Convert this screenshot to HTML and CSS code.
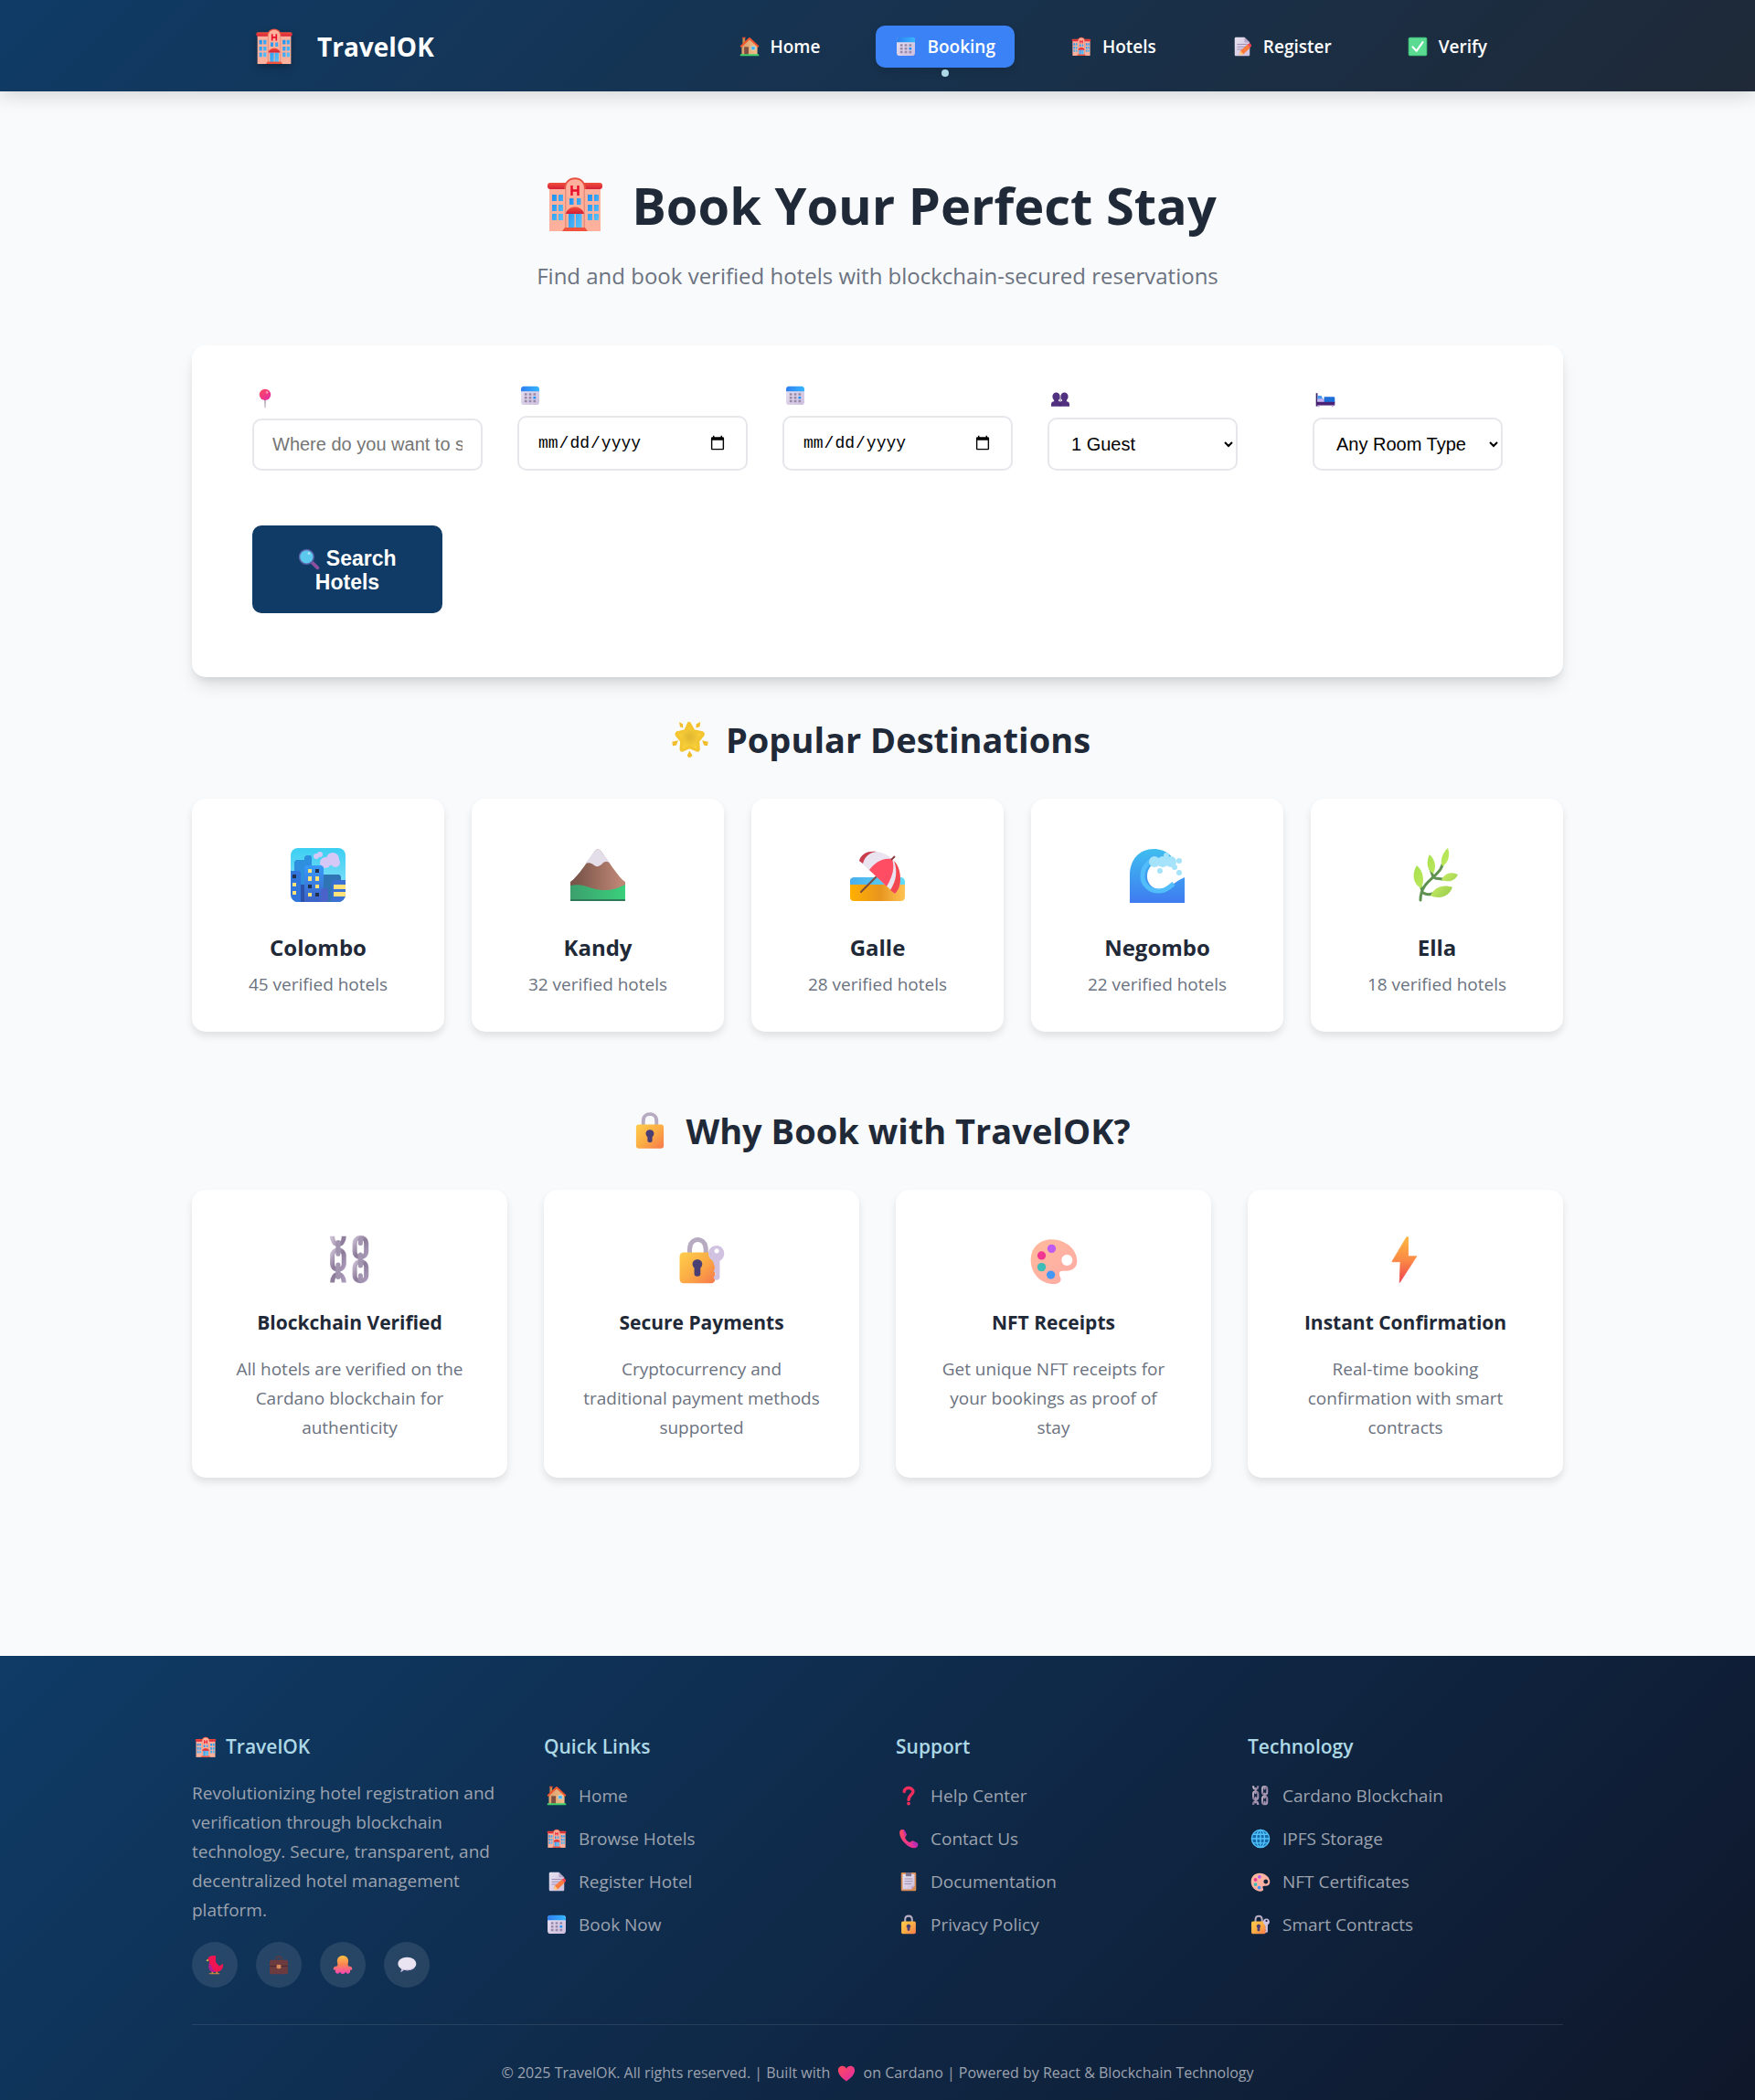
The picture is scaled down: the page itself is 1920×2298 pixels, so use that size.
FILE: index.html
```html
<!DOCTYPE html>
<html lang="en">
<head>
<meta charset="utf-8">
<meta name="viewport" content="width=device-width, initial-scale=1">
<title>TravelOK - Booking</title>
<link rel="stylesheet" href="styles.css">
</head>
<body>
<svg class="sprite" aria-hidden="true">
  <defs>
    <linearGradient id="g-roof" x1="0" y1="0" x2="0" y2="1"><stop offset="0" stop-color="#f0503c"/><stop offset="1" stop-color="#d41f38"/></linearGradient>
    <linearGradient id="g-glass" x1="0" y1="0" x2="1" y2="1"><stop offset="0" stop-color="#1d8ff0"/><stop offset="1" stop-color="#5cc4fb"/></linearGradient>
    <linearGradient id="g-sky" x1="0" y1="0" x2="0" y2="1"><stop offset="0" stop-color="#3bcff2"/><stop offset="1" stop-color="#9fe4fb"/></linearGradient>
    <linearGradient id="g-tower" x1="0" y1="0" x2="0" y2="1"><stop offset="0" stop-color="#389bfa"/><stop offset="1" stop-color="#3c5fc4"/></linearGradient>
    <linearGradient id="g-rock" x1="0" y1="0" x2="1" y2="0"><stop offset=".1" stop-color="#7a5549"/><stop offset=".9" stop-color="#bd8574"/></linearGradient>
    <linearGradient id="g-grass" x1="0" y1="0" x2="1" y2="0"><stop offset="0" stop-color="#3c9f6d"/><stop offset="1" stop-color="#3ad07c"/></linearGradient>
    <linearGradient id="g-sea" x1="0" y1="0" x2="1" y2="0"><stop offset="0" stop-color="#4aaeec"/><stop offset="1" stop-color="#5fdcf8"/></linearGradient>
    <linearGradient id="g-sand" x1="0" y1="0" x2="1" y2="0"><stop offset="0" stop-color="#ffb000"/><stop offset=".55" stop-color="#e8951f"/><stop offset="1" stop-color="#ffc454"/></linearGradient>
    <linearGradient id="g-wave" x1="0" y1="0" x2="0" y2="1"><stop offset="0" stop-color="#3fbdf0"/><stop offset="1" stop-color="#3f7bf0"/></linearGradient>
    <linearGradient id="g-leaf" x1="0" y1="0" x2="1" y2="1"><stop offset="0" stop-color="#9bdc45"/><stop offset=".6" stop-color="#c2ea62"/><stop offset="1" stop-color="#8fc446"/></linearGradient>
    <linearGradient id="g-steel" x1="0" y1="0" x2="1" y2="1"><stop offset="0" stop-color="#c9bdd2"/><stop offset=".5" stop-color="#8b7a98"/><stop offset="1" stop-color="#ab9abb"/></linearGradient>
    <linearGradient id="g-gold" x1="0" y1="0" x2="1" y2="1"><stop offset="0" stop-color="#ffcd4b"/><stop offset=".5" stop-color="#fbad45"/><stop offset="1" stop-color="#f7784b"/></linearGradient>
    <linearGradient id="g-bolt" x1="0" y1="0" x2="0" y2="1"><stop offset="0" stop-color="#fdb73f"/><stop offset=".5" stop-color="#fa8a45"/><stop offset="1" stop-color="#f0434f"/></linearGradient>
    <linearGradient id="g-pal" x1="0" y1="0" x2="1" y2="1"><stop offset="0" stop-color="#ffba9c"/><stop offset="1" stop-color="#ffaaa6"/></linearGradient>
    <linearGradient id="g-wall" x1="0" y1="0" x2="1" y2="0"><stop offset="0" stop-color="#d99e6b"/><stop offset="1" stop-color="#f0bd88"/></linearGradient>
    <linearGradient id="g-page" x1="0" y1="0" x2="1" y2="1"><stop offset="0" stop-color="#e8e2f0"/><stop offset="1" stop-color="#cdbfdf"/></linearGradient>
    <linearGradient id="g-cal" x1="0" y1="0" x2="1" y2="0"><stop offset="0" stop-color="#2e7ff0"/><stop offset="1" stop-color="#35b6ff"/></linearGradient>
    <linearGradient id="g-pink" x1="0" y1="0" x2="1" y2="1"><stop offset="0" stop-color="#ff4a5c"/><stop offset="1" stop-color="#e02ba8"/></linearGradient>
    <linearGradient id="g-octo" x1="0" y1="0" x2="0" y2="1"><stop offset="0" stop-color="#ffc043"/><stop offset=".5" stop-color="#fb8354"/><stop offset="1" stop-color="#fb45b5"/></linearGradient>
    <radialGradient id="g-star"><stop offset="0" stop-color="#dfb630"/><stop offset="1" stop-color="#ffd63c"/></radialGradient>
  </defs>

  <symbol id="hotel" viewBox="-2 -2 64 64">
    <path fill="#fdb09b" d="M2 10h56v49H2z"/>
    <rect fill="url(#g-roof)" y="6" width="60" height="7" rx="3"/>
    <path fill="#e8503f" d="M18 13C18-4 42-4 42 13z"/>
    <path fill="#fdb09b" d="M20 59V12C20-1 40-1 40 12v47z"/>
    <path fill="#e5907f" d="M19 13h1.500v45H19zM39.500 13H41v45h-1.500z"/>
    <path fill="none" stroke="#e8112d" stroke-width="2.500" d="M26.500 9v11M33.500 9v11M26.500 14.500h7"/>
    <g fill="url(#g-glass)">
      <path d="M5 19h5v7H5zM12 19h5v7h-5zM5 30h5v7H5zM12 30h5v7h-5zM5 40h5v7H5zM12 40h5v7h-5z"/>
      <path d="M44 19h5v7h-5zM51 19h5v7h-5zM44 30h5v7h-5zM51 30h5v7h-5zM44 40h5v7h-5zM51 40h5v7h-5z"/>
      <path d="M24 23h4.500v7H24zM32 23h4.500v7H32zM23 40h6.500v16H23zM31 40h6.500v16H31z"/>
    </g>
    <path fill="url(#g-roof)" d="M20 40c2-10 18-10 20 0z"/>
    <path fill="#f0523d" d="M19 55h22l3 4H16z"/>
  </symbol>

  <symbol id="home" viewBox="-2 -2 64 64">
    <path fill="#c88a50" d="M8 2h8v22H8z"/>
    <path fill="#e04a35" d="M7 0h10v4H7z"/>
    <path fill="url(#g-wall)" d="M5 28 30 6l25 22v29H5z"/>
    <path fill="none" stroke="#f0562f" stroke-width="6" stroke-linecap="round" stroke-linejoin="round" d="M3 29 30 4l27 25"/>
    <path fill="#7d4f43" d="M13 31h14v25H13z"/>
    <path fill="#3fb4ff" stroke="#f8dcb8" stroke-width="2" d="M35 29h13v12H35z"/>
    <rect fill="#3fcf6b" y="54" width="60" height="6" rx="2"/>
  </symbol>

  <symbol id="calendar" viewBox="-2 -2 64 64">
    <rect fill="url(#g-page)" x="1" y="1" width="58" height="58" rx="9"/>
    <path fill="url(#g-cal)" d="M1 16V9c0-5 3-9 9-9h40c6 0 9 4 9 9v7z"/>
    <path fill="#9889a8" d="M12 22h8v7h-8zM26 22h8v7h-8zM40 22h8v7h-8zM12 33h8v7h-8zM26 33h8v7h-8zM12 44h8v7h-8zM26 44h8v7h-8zM40 44h8v7h-8z"/>
    <path fill="#1c8ff5" d="M40 33h8v7h-8z"/>
  </symbol>

  <symbol id="memo" viewBox="-2 -2 64 64">
    <path fill="url(#g-page)" d="M6 4c0-2 2-4 4-4h27l17 17v39c0 2-2 4-4 4H10c-2 0-4-2-4-4z"/>
    <path fill="#b7a6c9" d="M37 0v13c0 3 1 4 4 4h13z"/>
    <path stroke="#a191b3" stroke-width="3" d="M14 23h32M14 31h30M14 39h20"/>
    <path fill="#fb7a3c" d="M21 57l3-13 22-20 10 9-22 21z"/>
    <path fill="#f0434f" d="M46 24l5-4c4-2 10 4 8 8l-3 5z"/>
    <path fill="#ffd08a" d="M21 57l3-13 10 10z"/>
  </symbol>

  <symbol id="check" viewBox="-2 -2 64 64">
    <rect fill="#3fbf78" width="60" height="60" rx="5"/>
    <rect fill="#5bdb92" x="3" y="3" width="54" height="54" rx="4"/>
    <path fill="none" stroke="#fff" stroke-width="6" stroke-linecap="round" stroke-linejoin="round" d="M14 31l12 13 20-28"/>
  </symbol>

  <symbol id="pin" viewBox="-2 -2 64 64">
    <path fill="#8d7f9c" d="M28 28h4l-1 32h-2z"/>
    <circle fill="url(#g-pink)" cx="30" cy="18" r="18"/>
    <circle fill="#ff8fa8" cx="36" cy="11" r="4"/>
  </symbol>

  <symbol id="people" viewBox="-2 -2 64 64">
    <g fill="#50307f">
      <ellipse cx="17" cy="27" rx="12" ry="13"/><ellipse cx="43" cy="27" rx="12" ry="13"/>
      <path d="M1 58V50c0-5 4-7 9-8V35h14v6c3 1 5 2 6 5 1-3 3-4 6-5v-6h14v7c5 1 9 3 9 8v8z"/>
    </g>
    <path stroke="#3a2066" stroke-width="2" d="M30 30v28"/>
  </symbol>

  <symbol id="bed" viewBox="-2 -2 64 64">
    <path fill="#3a2066" d="M0 16h5v42H0z"/>
    <path fill="#4a98f0" d="M5 24h12l7 14H5z"/>
    <path fill="#c5b2f0" d="M5 34h22v12H5z"/>
    <path fill="#1c6fd8" d="M26 28h30c3 0 4 2 4 5v13H26z"/>
    <path fill="#4b2275" d="M3 44h57v11H3z"/>
    <path fill="#b99be0" d="M6 55h5v5H6zM50 55h5v5h-5z"/>
  </symbol>

  <symbol id="search" viewBox="-2 -2 64 64">
    <path stroke="#8d4f9e" stroke-width="10" stroke-linecap="round" d="M41 41l14 14"/>
    <circle fill="#5cc8ee" stroke="#5a5fa5" stroke-width="4" cx="23" cy="23" r="21"/>
    <ellipse fill="#b7ecfa" cx="30" cy="13" rx="4" ry="3"/>
  </symbol>

  <symbol id="star" viewBox="-2 -2 64 64">
    <path fill="url(#g-star)" stroke="#f2c531" stroke-width="5" stroke-linejoin="round" d="M29 4c3 5 5 9 7 12l14 3c2 1 2 3 1 4l-8 10 1 13c0 2-1 3-3 2l-12-5-11 5c-2 1-3 0-3-2l1-13-8-10c-1-1-1-3 1-4l13-3 5-11c1-2 1-2 2-1z"/>
    <g fill="#f2bd2a">
      <path d="M12 1l6 4v6l-5-2zM47 1l-7 4v6l6-2zM0 34l10-2-3 8-6 1zM60 34l-10-2 3 8 6 1zM29 49l5 8-3 3h-4l-2-3z"/>
    </g>
  </symbol>

  <symbol id="city" viewBox="-2 -2 64 64">
    <clipPath id="city-clip"><rect width="60" height="59" rx="8"/></clipPath>
    <g clip-path="url(#city-clip)">
      <path fill="url(#g-sky)" d="M0 0h60v60H0z"/>
      <g fill="#d6c8f6"><circle cx="46" cy="12" r="7"/><circle cx="38" cy="16" r="6"/><circle cx="49" cy="16" r="5"/><circle cx="32" cy="7" r="3"/><circle cx="28" cy="9" r="3"/></g>
      <path fill="#2f8fdf" d="M4 59V15l2-2h9V10l2-2h5l1 2v49z"/>
      <path fill="#2f74b4" d="M36 59V29h17l2 2v28z"/>
      <path fill="#2f75dc" d="M0 25h9l2 2v33H0z"/>
      <path fill="#2b51a8" d="M11 40h4v20h-4z"/>
      <path fill="url(#g-tower)" d="M15 60V21l2-2h17l2 2v39z"/>
      <path fill="#4a63c8" d="M33 60V46l2-2h5l1 2v14z"/>
      <path fill="#3a6fd4" d="M45 60V37l2-2h13v25z"/>
      <path fill="#ffe27a" d="M2 38h4v4H2zM2 47h4v4H2zM19 23h4v4h-4zM19 31h4v5h-4zM27 31h4v5h-4zM27 40h4v4h-4zM19 49h4v4h-4zM47 40h13v5H47zM47 48h13v5H47z"/>
      <path fill="#22304f" d="M2 29h4v4H2zM27 23h4v4h-4zM19 40h4v4h-4zM27 49h4v4h-4z"/>
    </g>
  </symbol>

  <symbol id="mountain" viewBox="-2 -2 64 64">
    <path fill="url(#g-rock)" d="M0 37C8 32 22 10 27 3c1-2 5-2 6 0 6 7 20 30 27 34v16H0z"/>
    <path fill="#e4deea" d="M16 17 27 3c1-2 5-2 6 0l11 14c-4-3-6-3-9 0-4 4-7 4-10 1-3-2-6-2-9-1z"/>
    <path fill="url(#g-grass)" d="M0 41c10-2 17 1 24 3 14 4 25 2 36-4v18H0z"/>
    <path fill="#2e7a58" d="M0 56h60v2H0z"/>
  </symbol>

  <symbol id="beach" viewBox="-2 -2 64 64">
    <path fill="url(#g-sea)" d="M0 40v-4c0-3 2-4 5-4h50c3 0 5 2 5 5v3z"/>
    <path fill="url(#g-sand)" d="M0 40h60v13c0 4-2 5-5 5H5c-4 0-5-2-5-5z"/>
    <path stroke="#7a4b3c" stroke-width="2" stroke-linecap="round" d="M30 30 12 48"/>
    <path fill="#e9e4f0" d="M10 14C12 6 20 3 29 4c8 1 15 5 19 10 5 5 7 12 7 20 0 7-2 12-6 16z"/>
    <path fill="#c93d4d" d="M10 14C12 6 20 3 29 4c-8 1-13 5-15 13z"/>
    <path fill="#ff4d63" d="M21 24c5-7 14-14 25-12 3 9 1 18-6 30z"/>
    <path fill="#f2474f" d="M48 14c5 5 7 12 7 20 0 7-2 12-6 16l-5-4c7-11 8-21 4-32z"/>
    <path stroke="#8a3d3d" stroke-width="2" d="M45 13l4-4"/>
  </symbol>

  <symbol id="wave" viewBox="-2 -2 64 64">
    <path fill="url(#g-wave)" d="M0 60V30C0 12 11 1 26 1c11 0 20 6 23 14l-17 0c-8 1-13 8-13 16 0 8 6 14 14 14 10 0 17-9 27-13v28z"/>
    <path fill="none" stroke="#52bdfb" stroke-width="5" d="M26 13c-8 3-12 10-12 18 0 9 8 16 17 16 8 0 12-4 17-8"/>
    <g fill="#a5e3fa"><circle cx="27" cy="15" r="6"/><circle cx="36" cy="15" r="6"/><circle cx="45" cy="15" r="6"/><circle cx="49" cy="21" r="3"/><circle cx="54" cy="14" r="3"/><circle cx="54" cy="27" r="3"/><circle cx="33" cy="25" r="3"/><circle cx="40" cy="8" r="3"/></g>
  </symbol>

  <symbol id="herb" viewBox="0 -2 64 64">
    <path fill="none" stroke="#5f9250" stroke-width="3" stroke-linecap="round" d="M14 57c0-13 7-19 15-26 6-6 9-9 10-17M28 32l-3-9M30 33l8 1M16 47l-2-7M17 49c4 3 7 2 10 1"/>
    <g fill="url(#g-leaf)">
      <path d="M44 0c3 8 0 17-6 20-3-6 0-15 6-20zM24 7c6 6 8 13 4 21-7-4-8-13-4-21zM10 19c7 6 9 16 5 25-9-4-11-16-5-25zM55 29c-3 7-10 9-18 6 3-7 10-10 18-6zM49 43c-3 9-13 14-24 9 4-9 14-13 24-9z"/>
    </g>
  </symbol>

  <symbol id="lock" viewBox="-2 -2 64 64">
    <path fill="none" stroke="#b7abc2" stroke-width="6" d="M19 24V14c0-15 22-15 22 0v10"/>
    <rect fill="url(#g-gold)" x="7" y="20" width="46" height="40" rx="5"/>
    <path fill="#4a3f75" d="M30 29c7 0 9 8 4 12v6c0 4-8 4-8 0v-6c-5-4-3-12 4-12z"/>
  </symbol>

  <symbol id="lock-key" viewBox="-2 -2 64 64">
    <path fill="none" stroke="#b7abc2" stroke-width="6" d="M14 24V16c0-17 21-17 21 0v8"/>
    <rect fill="url(#g-gold)" x="1" y="20" width="46" height="40" rx="5"/>
    <path fill="#4a3f75" d="M24 29c7 0 8 8 4 11v8c0 4-8 4-8 0v-8c-4-3-3-11 4-11z"/>
    <path fill="#d0c2e0" fill-rule="evenodd" d="M49 11c10 0 14 14 4 20v21c0 5-8 5-8 0l3-4-3-4 2-4-3-9c-10-6-6-20 5-20zm0 4a3 3 0 1 0 .1 0z"/>
  </symbol>

  <symbol id="chains" viewBox="-1 -1 64 64">
    <g fill="none" stroke="url(#g-steel)" stroke-width="6">
      <rect x="8" y="18" width="15" height="25" rx="7"/><rect x="37" y="2" width="15" height="25" rx="7"/><rect x="37" y="33" width="15" height="25" rx="7"/>
      <path d="M8 0c0 14 15 14 15 0M8 60c0-14 15-14 15 0"/>
    </g>
    <path stroke="#a395b0" stroke-width="6" stroke-linecap="round" d="M15.500 8v15M15.500 37v16M44.500 24v14M44.500 4v5M44.500 51v5"/>
  </symbol>

  <symbol id="palette" viewBox="-2 -2 64 64">
    <path fill="url(#g-pal)" fill-rule="evenodd" d="M27 3c18 0 33 13 33 28 0 9-6 13-14 13-7 0-9 0-9 4 0 3 2 4 2 7 0 4-4 6-9 6C13 61 0 47 0 30 0 14 11 3 27 3zm20 20c-4 0-7 3-7 7s3 7 7 7 7-3 7-7-3-7-7-7z"/>
    <circle fill="#bf5af2" cx="27" cy="15" r="5.500"/><circle fill="#f23591" cx="14" cy="24" r="5.500"/><circle fill="#3dbcb8" cx="14" cy="39" r="5.500"/><circle fill="#4597f7" cx="26" cy="49" r="5.500"/>
  </symbol>

  <symbol id="bolt" viewBox="0 -1 64 64">
    <path fill="url(#g-bolt)" stroke="url(#g-bolt)" stroke-linejoin="round" d="M33 1 14 33h11l-1 27 22-34H35V1z"/>
  </symbol>

  <symbol id="question" viewBox="-2 -2 64 64">
    <path fill="none" stroke="#f02d5c" stroke-width="10" stroke-linecap="round" d="M16 17C18 1 45 2 44 18c-1 9-14 11-14 25"/>
    <circle fill="#f02d5c" cx="30" cy="55" r="5.500"/>
  </symbol>

  <symbol id="phone" viewBox="-2 -2 64 64">
    <path fill="url(#g-pink)" d="M4 3c5-4 11-3 14 3l5 10c2 4-4 7-4 10 1 6 9 14 15 15 4 1 7-6 11-4l11 6c5 3 5 9 1 13-8 8-24 3-38-11C4 31-3 11 4 3z"/>
    <path fill="#b82fb5" d="M12 0c4 1 6 4 11 14 1 4-3 6-5 8zM58 44c3 4 1 9-2 13L41 45l4-6z"/>
  </symbol>

  <symbol id="clipboard" viewBox="-2 -2 64 64">
    <rect fill="#d98a52" x="6" y="1" width="48" height="59" rx="4"/>
    <path fill="url(#g-page)" d="M11 6h38v37L38 55H11z"/>
    <path fill="#bfa6d8" d="M38 55V44h11z"/>
    <path fill="#7f728c" d="M21 1h18v12H21z"/>
    <path stroke="#a191b3" stroke-width="3" d="M17 21h26M17 29h26M17 37h22"/>
  </symbol>

  <symbol id="globe" viewBox="-2 -2 64 64">
    <circle fill="#1668a8" cx="30" cy="30" r="28"/>
    <g fill="none" stroke="#52c4fb" stroke-width="4"><circle cx="30" cy="30" r="28"/><ellipse cx="30" cy="30" rx="13" ry="28"/><path d="M30 2v56M2 30h56M7 16h46M7 44h46"/></g>
  </symbol>

  <symbol id="bird" viewBox="-2 -2 64 64">
    <path fill="#d98a3a" d="M20 48h5v9h7v3H12v-3h8zM34 48h5v9h6v3H32v-3h2z"/>
    <path fill="#ee1552" d="M8 12C10 2 18 0 33 1v20l11 13 12-8c2 14-4 24-17 26-15 4-29-2-28-18l2-14z"/>
    <path fill="#b01b98" d="M12 26c12 6 8 22 22 27-15 2-24-7-23-19z"/>
    <path fill="#ffc13d" d="M9 12l-7 4 7 4z"/>
  </symbol>

  <symbol id="briefcase" viewBox="-2 -2 64 64">
    <path fill="none" stroke="#62383b" stroke-width="4" d="M22 16V9c0-6 16-6 16 0v7"/>
    <rect fill="#6b3b40" x="1" y="15" width="58" height="45" rx="5"/>
    <path fill="#4c2a30" d="M1 33h58v3H1z"/>
    <rect fill="#d98a5a" x="23" y="30" width="14" height="12" rx="3"/>
  </symbol>

  <symbol id="octopus" viewBox="-2 -2 64 64">
    <path fill="url(#g-octo)" d="M30 1c14 0 20 12 17 23-1 4-1 7 1 10 6 0 12 3 12 8 0 4-4 5-7 5 3 6-3 13-8 11-4-1-5-4-6-6-1 3-2 7-9 7s-8-4-9-7c-1 2-2 5-6 6-5 2-11-5-8-11-3 0-7-1-7-5 0-5 6-8 12-8 2-3 2-6 1-10C10 13 16 1 30 1z"/>
  </symbol>

  <symbol id="speech" viewBox="-2 -2 64 64">
    <path fill="#e9e3f2" d="M31 6c16 0 29 9 29 21S47 48 31 48c-4 0-8-1-11-2-2 4-5 6-10 6 3-3 3-6 2-10C6 39 2 33 2 27 2 15 15 6 31 6z"/>
    <path fill="#c4b5dc" d="M12 42c11 5 32 5 44-5-8 11-23 13-36 9-2 4-5 6-10 6 3-3 3-6 2-10z"/>
  </symbol>

  <symbol id="heart" viewBox="-2 -2 64 64">
    <path fill="url(#g-pink)" d="M30 57C10 44 1 31 1 19 1 1 24-1 30 13 36-1 59 1 59 19c0 12-9 25-29 38z"/>
  </symbol>
</svg>

<header class="site-header">
  <div class="header-inner">
    <a class="logo" href="#"><svg class="icon icon-logo" aria-hidden="true"><use href="#hotel"/></svg>TravelOK</a>
    <nav class="nav" aria-label="Main">
      <a class="nav-link" href="#"><svg class="icon icon-sm" aria-hidden="true"><use href="#home"/></svg>Home</a>
      <a class="nav-link active" href="#" aria-current="page"><svg class="icon icon-sm" aria-hidden="true"><use href="#calendar"/></svg>Booking</a>
      <a class="nav-link" href="#"><svg class="icon icon-sm" aria-hidden="true"><use href="#hotel"/></svg>Hotels</a>
      <a class="nav-link" href="#"><svg class="icon icon-sm" aria-hidden="true"><use href="#memo"/></svg>Register</a>
      <a class="nav-link" href="#"><svg class="icon icon-sm" aria-hidden="true"><use href="#check"/></svg>Verify</a>
    </nav>
  </div>
</header>

<main class="container">
  <section class="hero">
    <h1 class="hero-title"><svg class="icon icon-xl" aria-hidden="true"><use href="#hotel"/></svg>Book Your Perfect Stay</h1>
    <p class="hero-text">Find and book verified hotels with blockchain-secured reservations</p>
  </section>

  <form class="search-card">
    <div class="field">
      <label class="field-label" for="destination" aria-label="Destination"><svg class="icon icon-sm" aria-hidden="true"><use href="#pin"/></svg></label>
      <input class="control" id="destination" type="text" placeholder="Where do you want to stay?">
    </div>
    <div class="field">
      <label class="field-label" for="check-in" aria-label="Check-in"><svg class="icon icon-sm" aria-hidden="true"><use href="#calendar"/></svg></label>
      <input class="control control-date" id="check-in" type="date">
    </div>
    <div class="field">
      <label class="field-label" for="check-out" aria-label="Check-out"><svg class="icon icon-sm" aria-hidden="true"><use href="#calendar"/></svg></label>
      <input class="control control-date" id="check-out" type="date">
    </div>
    <div class="field">
      <label class="field-label" for="guests" aria-label="Guests"><svg class="icon icon-sm" aria-hidden="true"><use href="#people"/></svg></label>
      <select class="control control-select" id="guests"><option>1 Guest</option><option>2 Guests</option><option>3 Guests</option></select>
    </div>
    <div class="field">
      <label class="field-label" for="room" aria-label="Room type"><svg class="icon icon-sm" aria-hidden="true"><use href="#bed"/></svg></label>
      <select class="control control-select" id="room"><option>Any Room Type</option><option>Single</option><option>Double</option></select>
    </div>
    <button class="search-button" type="submit"><svg class="icon icon-text" aria-hidden="true"><use href="#search"/></svg> Search Hotels</button>
  </form>

  <section class="section">
    <h2 class="section-title"><svg class="icon icon-md" aria-hidden="true"><use href="#star"/></svg>Popular Destinations</h2>
    <div class="destinations">
      <article class="card destination"><svg class="icon icon-xl" aria-hidden="true"><use href="#city"/></svg><h3 class="destination-name">Colombo</h3><p class="destination-count">45 verified hotels</p></article>
      <article class="card destination"><svg class="icon icon-xl" aria-hidden="true"><use href="#mountain"/></svg><h3 class="destination-name">Kandy</h3><p class="destination-count">32 verified hotels</p></article>
      <article class="card destination"><svg class="icon icon-xl" aria-hidden="true"><use href="#beach"/></svg><h3 class="destination-name">Galle</h3><p class="destination-count">28 verified hotels</p></article>
      <article class="card destination"><svg class="icon icon-xl" aria-hidden="true"><use href="#wave"/></svg><h3 class="destination-name">Negombo</h3><p class="destination-count">22 verified hotels</p></article>
      <article class="card destination"><svg class="icon icon-xl" aria-hidden="true"><use href="#herb"/></svg><h3 class="destination-name">Ella</h3><p class="destination-count">18 verified hotels</p></article>
    </div>
  </section>

  <section class="section">
    <h2 class="section-title"><svg class="icon icon-md" aria-hidden="true"><use href="#lock"/></svg>Why Book with TravelOK?</h2>
    <div class="features">
      <article class="card feature"><svg class="icon icon-lg" aria-hidden="true"><use href="#chains"/></svg><h3 class="feature-name">Blockchain Verified</h3><p class="feature-text">All hotels are verified on the Cardano blockchain for authenticity</p></article>
      <article class="card feature"><svg class="icon icon-lg" aria-hidden="true"><use href="#lock-key"/></svg><h3 class="feature-name">Secure Payments</h3><p class="feature-text">Cryptocurrency and traditional payment methods supported</p></article>
      <article class="card feature"><svg class="icon icon-lg" aria-hidden="true"><use href="#palette"/></svg><h3 class="feature-name">NFT Receipts</h3><p class="feature-text">Get unique NFT receipts for your bookings as proof of stay</p></article>
      <article class="card feature"><svg class="icon icon-lg" aria-hidden="true"><use href="#bolt"/></svg><h3 class="feature-name">Instant Confirmation</h3><p class="feature-text">Real-time booking confirmation with smart contracts</p></article>
    </div>
  </section>
</main>

<footer class="site-footer">
  <div class="container">
    <div class="footer-columns">
      <section>
        <h4 class="footer-title"><svg class="icon icon-text" aria-hidden="true"><use href="#hotel"/></svg>TravelOK</h4>
        <p class="footer-about">Revolutionizing hotel registration and verification through blockchain technology. Secure, transparent, and decentralized hotel management platform.</p>
        <div class="social">
          <a class="social-link" href="#" aria-label="Twitter"><svg class="icon icon-sm" aria-hidden="true"><use href="#bird"/></svg></a>
          <a class="social-link" href="#" aria-label="LinkedIn"><svg class="icon icon-sm" aria-hidden="true"><use href="#briefcase"/></svg></a>
          <a class="social-link" href="#" aria-label="GitHub"><svg class="icon icon-sm" aria-hidden="true"><use href="#octopus"/></svg></a>
          <a class="social-link" href="#" aria-label="Discord"><svg class="icon icon-sm" aria-hidden="true"><use href="#speech"/></svg></a>
        </div>
      </section>
      <section>
        <h4 class="footer-title">Quick Links</h4>
        <ul class="footer-links">
          <li><a href="#"><svg class="icon icon-sm" aria-hidden="true"><use href="#home"/></svg>Home</a></li>
          <li><a href="#"><svg class="icon icon-sm" aria-hidden="true"><use href="#hotel"/></svg>Browse Hotels</a></li>
          <li><a href="#"><svg class="icon icon-sm" aria-hidden="true"><use href="#memo"/></svg>Register Hotel</a></li>
          <li><a href="#"><svg class="icon icon-sm" aria-hidden="true"><use href="#calendar"/></svg>Book Now</a></li>
        </ul>
      </section>
      <section>
        <h4 class="footer-title">Support</h4>
        <ul class="footer-links">
          <li><a href="#"><svg class="icon icon-sm" aria-hidden="true"><use href="#question"/></svg>Help Center</a></li>
          <li><a href="#"><svg class="icon icon-sm" aria-hidden="true"><use href="#phone"/></svg>Contact Us</a></li>
          <li><a href="#"><svg class="icon icon-sm" aria-hidden="true"><use href="#clipboard"/></svg>Documentation</a></li>
          <li><a href="#"><svg class="icon icon-sm" aria-hidden="true"><use href="#lock"/></svg>Privacy Policy</a></li>
        </ul>
      </section>
      <section>
        <h4 class="footer-title">Technology</h4>
        <ul class="footer-links">
          <li><a href="#"><svg class="icon icon-sm" aria-hidden="true"><use href="#chains"/></svg>Cardano Blockchain</a></li>
          <li><a href="#"><svg class="icon icon-sm" aria-hidden="true"><use href="#globe"/></svg>IPFS Storage</a></li>
          <li><a href="#"><svg class="icon icon-sm" aria-hidden="true"><use href="#palette"/></svg>NFT Certificates</a></li>
          <li><a href="#"><svg class="icon icon-sm" aria-hidden="true"><use href="#lock-key"/></svg>Smart Contracts</a></li>
        </ul>
      </section>
    </div>
    <p class="copyright">© 2025 TravelOK. All rights reserved. | Built with <svg class="icon icon-xs" role="img" aria-label="love"><use href="#heart"/></svg> on Cardano | Powered by React &amp; Blockchain Technology</p>
  </div>
</footer>
</body>
</html>
```
FILE: styles.css
```css
* {
  box-sizing: border-box;
}

body {
  margin: 0;
  background: #f9fafc;
  color: #1f2937;
  font-family: "Open Sans", "Noto Sans", sans-serif;
  font-size: 19px;
  line-height: 32px;
}

h1,
h2,
h3,
h4,
p,
ul {
  margin: 0;
  padding: 0;
}

a {
  color: inherit;
  text-decoration: none;
}

.sprite {
  position: absolute;
  width: 0;
  height: 0;
}

.container {
  max-width: 1500px;
  margin: 0 auto;
}

/* Icons */
.icon {
  display: block;
  flex: none;
}

.icon-xs {
  display: inline-block;
  width: 20px;
  height: 20px;
  margin: 0 4px;
  vertical-align: -5px;
}

.icon-sm {
  width: 22px;
  height: 22px;
}

.icon-text {
  display: inline-block;
  width: 24px;
  height: 24px;
  vertical-align: -5px;
}

.icon-logo,
.icon-md {
  width: 42px;
  height: 42px;
}

.icon-lg {
  width: 54px;
  height: 54px;
}

.icon-xl {
  width: 64px;
  height: 64px;
}

/* Header */
.site-header {
  position: relative;
  background: linear-gradient(135deg, #0f3b66 0%, #1f2937 100%);
  box-shadow: 0 5px 20px rgba(0, 0, 0, 0.15);
  color: #fff;
}

.header-inner {
  display: flex;
  align-items: center;
  justify-content: space-between;
  max-width: 1376px;
  height: 100px;
  margin: 0 auto;
  padding-top: 2px;
}

.logo {
  display: flex;
  align-items: center;
  gap: 26px;
  padding-left: 7px;
  font-size: 28px;
  font-weight: 700;
}

.icon-logo {
  filter: drop-shadow(0 3px 4px rgba(0, 0, 0, 0.3));
}

.nav {
  display: flex;
  gap: 40px;
}

.nav-link {
  position: relative;
  display: flex;
  align-items: center;
  gap: 12px;
  height: 46px;
  padding: 0 21px 0 22px;
  border-radius: 10px;
  font-weight: 600;
}

.nav-link.active {
  background: #3b82f6;
  box-shadow: 0 5px 8px rgba(0, 0, 0, 0.1);
}

.nav-link.active::after {
  content: "";
  position: absolute;
  bottom: -10px;
  left: 50%;
  width: 8px;
  height: 8px;
  margin-left: -4px;
  border-radius: 50%;
  background: #add8e6;
}

/* Hero */
.hero {
  padding: 84px 0 56px;
  text-align: center;
}

.hero-title {
  display: flex;
  align-items: center;
  justify-content: center;
  gap: 30px;
  padding-left: 8px;
  font-size: 56px;
  line-height: 80px;
}

.hero-text {
  margin-top: 18px;
  color: #6b7280;
  font-size: 24px;
  line-height: 40px;
}

/* Search form */
.search-card {
  display: grid;
  grid-template-columns: repeat(auto-fit, minmax(200px, 1fr));
  align-items: end;
  gap: 60px 82px;
  padding: 44px 66px 70px;
  border-radius: 15px;
  background: #fff;
  box-shadow: 0 12px 20px -4px rgba(0, 0, 0, 0.12), 0 5px 8px -2px rgba(0, 0, 0, 0.08);
}

.field-label {
  display: block;
  padding: 0 3px 11px;
}

.control {
  display: block;
  box-sizing: content-box;
  width: 100%;
  height: 23px;
  padding: 15px 20px;
  border: 2px solid #e5e7eb;
  border-radius: 10px;
  background: #fff;
  color: #000;
  font-family: "Liberation Sans", Arial, sans-serif;
  font-size: 20px;
}

.control::placeholder {
  color: #757575;
}

.control-date {
  height: 26px;
  font-family: "Liberation Mono", monospace;
  font-size: 18px;
}

.control-select {
  box-sizing: border-box;
  height: 58px;
}

.search-button {
  padding: 23px 40px 21px;
  border: 0;
  border-radius: 10px;
  background: #0f3b66;
  color: #fff;
  font-family: "Liberation Sans", Arial, sans-serif;
  font-size: 23px;
  font-weight: 700;
  line-height: 26px;
}

/* Sections */
.section {
  margin-top: 42px;
}

.section + .section {
  margin-top: 82px;
}

.section-title {
  display: flex;
  align-items: center;
  justify-content: center;
  gap: 18px;
  padding-left: 7px;
  margin-bottom: 39px;
  font-size: 38px;
  line-height: 52px;
}

.card {
  display: flex;
  flex-direction: column;
  align-items: center;
  border-radius: 15px;
  background: #fff;
  box-shadow: 0 5px 8px rgba(0, 0, 0, 0.1);
  text-align: center;
}

.destinations {
  display: grid;
  grid-template-columns: repeat(5, 1fr);
  gap: 30px;
}

.destination {
  padding: 52px 30px 37px;
}

.destination-name {
  margin: 31px 0 9px;
  font-size: 24px;
}

.destination-count {
  color: #6b7280;
  line-height: 30px;
}

.features {
  display: grid;
  grid-template-columns: repeat(4, 1fr);
  gap: 40px;
}

.feature {
  padding: 50px 40px 39px;
}

.feature-name {
  margin: 25px 0 19px;
  font-size: 21px;
}

.feature-text {
  color: #6b7280;
}

/* Footer */
.site-footer {
  margin-top: 195px;
  padding: 84px 0 16px;
  background: linear-gradient(135deg, #0f3b66 0%, #0f172a 100%);
  color: #9ca3af;
}

.footer-columns {
  display: grid;
  grid-template-columns: repeat(4, 1fr);
  gap: 40px;
  padding-bottom: 40px;
  border-bottom: 1px solid rgba(255, 255, 255, 0.1);
}

.footer-title {
  margin-bottom: 20px;
  color: #add8e6;
  font-size: 21px;
  font-weight: 600;
  line-height: 30px;
}

.footer-title .icon-text {
  margin: 0 10px 0 3px;
}

.social {
  display: flex;
  gap: 20px;
  margin-top: 19px;
}

.social-link {
  display: flex;
  align-items: center;
  justify-content: center;
  width: 50px;
  height: 50px;
  border-radius: 50%;
  background: rgba(255, 255, 255, 0.1);
}

.footer-links {
  display: grid;
  gap: 15px;
  padding-top: 3px;
  list-style: none;
}

.footer-links a {
  display: flex;
  align-items: center;
  gap: 13px;
  padding-left: 3px;
}

.copyright {
  padding-top: 38px;
  font-size: 16px;
  line-height: 28px;
  text-align: center;
}
```
